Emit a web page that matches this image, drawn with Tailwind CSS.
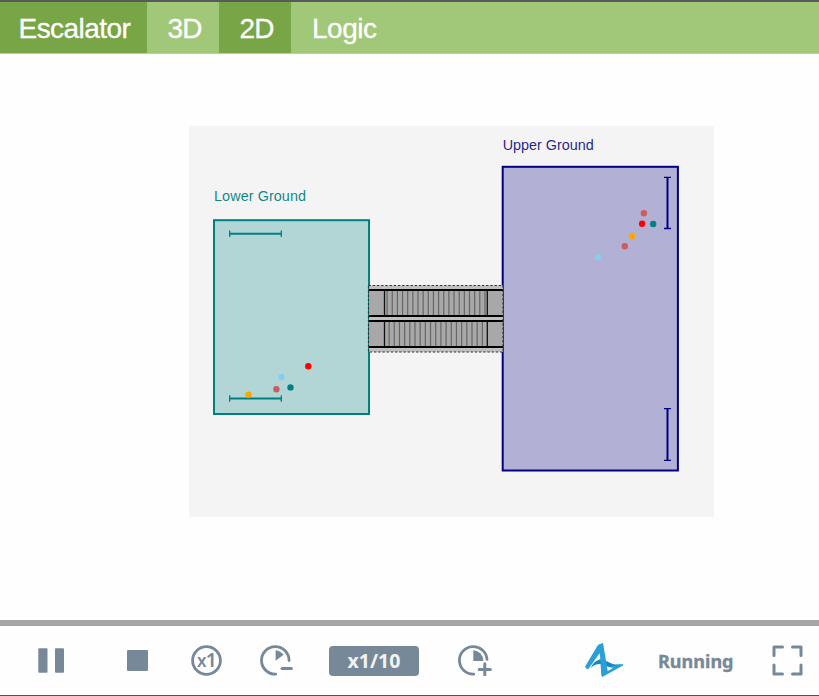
<!DOCTYPE html>
<html lang="en">
<head>
<meta charset="utf-8">
<title>Escalator</title>
<script src="https://cdn.jsdelivr.net/npm/@tailwindcss/browser@4"></script>
</head>
<body class="bg-[#fefefe] font-['Liberation_Sans',Arial,sans-serif]">
<div class="flex flex-col w-[819px] h-[696px] overflow-hidden border-t-2 border-b border-t-[#5a5a5a] border-b-[#505050]">
  <nav class="flex h-[52px] shrink-0 bg-[#a0c878] text-white text-[28px] leading-[53px] border-b border-[#b4d494] whitespace-nowrap [-webkit-text-stroke:0.3px_white]">
    <div class="w-[147px] pl-[18.5px] bg-[#78a545] tracking-[-0.55px]">Escalator</div>
    <div class="w-[72px] pl-[20.5px] tracking-[-0.7px]">3D</div>
    <div class="w-[72px] pl-[20.5px] bg-[#78a545] tracking-[-0.7px]">2D</div>
    <div class="pl-[21px] tracking-[-0.5px]">Logic</div>
  </nav>
  <main class="flex-1 pt-[72px] pl-[189px]">
    <svg class="block w-[525px] h-[391px] bg-[#f4f4f4]" viewBox="189 126 525 391" font-family="'Liberation Sans',Arial,sans-serif" font-size="14.4">
      <text x="214" y="201" fill="#008080" fill-opacity=".95" textLength="92">Lower Ground</text>
      <text x="502.7" y="150" fill="#000080" fill-opacity=".88" textLength="91">Upper Ground</text>
      <rect x="214" y="220.2" width="155" height="193.8" fill="#b2d6d6" stroke="#008080" stroke-width="2"/>
      <rect x="502.7" y="166.8" width="175.2" height="303.7" fill="#b2b0d4" stroke="#000080" stroke-width="2"/>
      <path d="M229.5 233.8H281.5M229.5 398.5H281.5" stroke="#008080" stroke-width="2"/>
      <path d="M229.7 230.5v6.5M281.3 230.5v6.5M229.7 395.3v6.5M281.3 395.3v6.5" stroke="#008080" stroke-width="1.3"/>
      <path d="M667.5 177V229M667.5 408.5V460.5" stroke="#000080" stroke-width="2"/>
      <path d="M664 177.3h7M664 228.5h7M664 408.7h7M664 460.4h7" stroke="#000080" stroke-width="1.3"/>
      <rect x="369" y="285.5" width="134" height="66.5" fill="#bfbfbf"/>
      <rect x="369" y="290" width="134" height="26" fill="#a8a8a8"/>
      <rect x="369" y="321" width="134" height="26" fill="#a8a8a8"/>
      <path d="M386.5 303H486" stroke="#666" stroke-width="24" stroke-dasharray="1.2 3.95"/>
      <path d="M388.5 334H486" stroke="#666" stroke-width="24" stroke-dasharray="1.2 3.98"/>
      <path d="M369 290H503M369 316H503M369 321H503M369 347H503" stroke="#000" stroke-width="2"/>
      <path d="M384.5 291v24M487.3 291v24M384.5 322v24M487.3 322v24" stroke="#111" stroke-width="1.3"/>
      <rect x="368.5" y="285.5" width="134.5" height="66.5" fill="none" stroke="#333" stroke-width="1.2" stroke-dasharray="2.4 1.8"/>
      <circle cx="308.3" cy="366.2" r="3.2" fill="#f00"/>
      <circle cx="281.4" cy="377" r="3.2" fill="#87ceeb"/>
      <circle cx="276.4" cy="389.2" r="3.2" fill="#cd5c5c"/>
      <circle cx="290.5" cy="387.4" r="3.2" fill="#008080"/>
      <circle cx="248.5" cy="394.6" r="3.2" fill="#ffa500"/>
      <circle cx="643.9" cy="213.3" r="3.2" fill="#cd5c5c"/>
      <circle cx="642.1" cy="223.8" r="3.2" fill="#f00"/>
      <circle cx="653.2" cy="224" r="3.2" fill="#008080"/>
      <circle cx="632" cy="236" r="3.2" fill="#ffa500"/>
      <circle cx="624.8" cy="246.3" r="3.2" fill="#cd5c5c"/>
      <circle cx="597.9" cy="257.2" r="3.2" fill="#87ceeb"/>
    </svg>
  </main>
  <footer class="flex items-center h-[75px] shrink-0 border-t-6 border-[#a6a6a6] text-[#778899]">
    <svg class="ml-[38px] w-[26px] h-[25px]" viewBox="0 0 26 25" fill="currentColor"><rect x=".3" y=".3" width="9.2" height="24.4" rx="1"/><rect x="17" y=".3" width="9" height="24.4" rx="1"/></svg>
    <div class="ml-[63px] w-[21px] h-[21px] rounded-[1px] bg-[#778899]"></div>
    <svg class="ml-[43px] w-[31px] h-[31px]" viewBox="0 0 31 31"><circle cx="15.5" cy="15.5" r="13.9" fill="none" stroke="currentColor" stroke-width="2.8"/><text x="6" y="21.8" font-family="'Noto Sans','Open Sans',sans-serif" fill="currentColor" font-weight="600"><tspan font-size="17">x</tspan><tspan font-size="19.5" dx="-.8">1</tspan></text></svg>
    <svg class="ml-[38px] w-[35px] h-[31px]" viewBox="0 0 35 31"><path d="M15.7 29.2A13.8 13.8 0 1 1 29.1 15.5" fill="none" stroke="currentColor" stroke-width="2.8" stroke-linecap="round"/><path d="M15.6 5.2Q20.5 5.7 23.6 9.8L15.6 15.8Z" fill="currentColor"/><path d="M22 23.5H31.4" stroke="currentColor" stroke-width="3" stroke-linecap="round"/></svg>
    <div class="ml-[34px] w-[90px] h-[30px] rounded-[4px] bg-[#778899] text-[#f2f2f2] font-bold text-[19.5px] leading-[30px] text-center font-['Noto_Sans','Open_Sans',sans-serif]">x1/10</div>
    <svg class="ml-[39px] w-[35px] h-[31px]" viewBox="0 0 35 31"><path d="M15.7 29.2A13.8 13.8 0 1 1 29 14.4" fill="none" stroke="currentColor" stroke-width="2.8" stroke-linecap="round"/><path d="M15.3 5.2A10.5 10.5 0 0 1 25.4 15.9H15.3Z" fill="currentColor"/><path d="M21.2 24.4H32.4M26.8 18.8V30" stroke="currentColor" stroke-width="3" stroke-linecap="round"/></svg>
    <svg class="ml-[92px] w-[39px] h-[35px]" viewBox="0 0 39 35"><path d="M5.8 25.2Q8.5 18.2 14.4 16.6C20.2 15.8 24.5 20.9 30.7 21.6L37 21.2L31.5 24.8Q26.5 25.2 22.3 23.4C16.5 20.2 10.5 20 5.8 25.2Z" fill="#1a86bd"/><path d="M.1 23.6L12.2 3.2Q14 1.2 18 .1L17.8 5.8L3.6 25.7Q1 26.8.1 23.6Z" fill="#2a9fd8"/><path d="M12.6 3L18 .1L21 17.8L22.7 28L28.4 24.8L25.4 23Q32 23 38 21L38 22.6L17.3 34L16.3 32.5L15 12Z" fill="#2a9fd8"/></svg>
    <svg class="ml-[34px] w-[80px] h-[33px]" viewBox="0 0 80 33"><text x="0" y="23.5" font-family="'Noto Sans','Open Sans',sans-serif" font-weight="700" font-size="18.5" fill="currentColor" stroke="currentColor" stroke-width=".35" textLength="75.5" lengthAdjust="spacingAndGlyphs">Running</text></svg>
    <svg class="ml-[34px] w-[31px] h-[31px]" viewBox="0 0 31 31" fill="none" stroke="currentColor" stroke-width="3" stroke-linecap="round" stroke-linejoin="round"><path d="M10.5 2H2V10.5M20.5 2H29V10.5M2 20V29H10.5M20.5 29H29V20"/></svg>
  </footer>
</div>
</body>
</html>
